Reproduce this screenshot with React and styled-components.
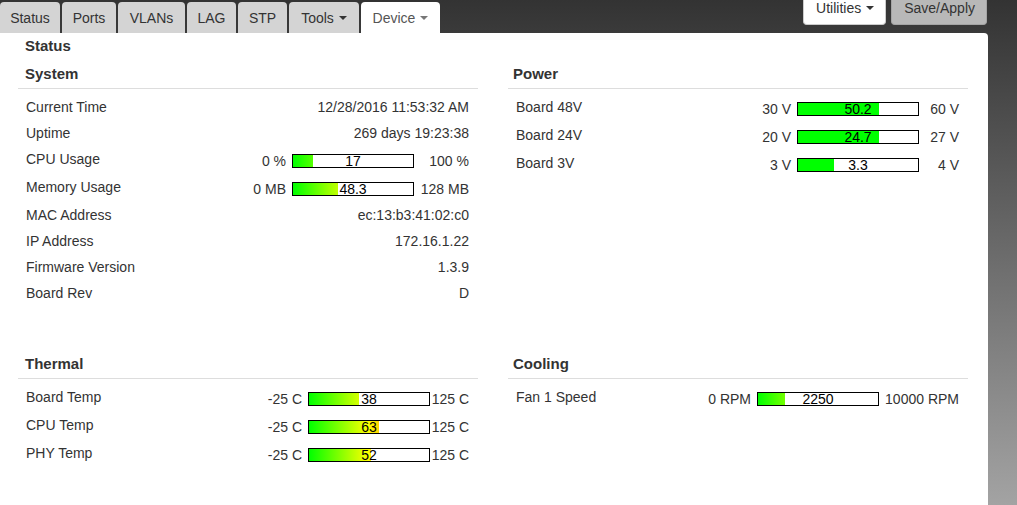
import React from 'react';
import styled, { createGlobalStyle } from 'styled-components';

const Global = createGlobalStyle`
  html, body { margin: 0; padding: 0; }
  body {
    font-family: "Liberation Sans", Arial, sans-serif;
    font-size: 14px;
    color: #333;
    background-color: #a3a3a3;
    background-image: linear-gradient(to bottom, #333333 0, #a3a3a3 505px);
    background-repeat: no-repeat;
    min-height: 100vh;
  }
  * { box-sizing: content-box; }
`;

const Page = styled.div`
  width: 988px;
  min-height: 100vh;
  display: flex;
  flex-direction: column;
`;

const TopBar = styled.header`
  display: flex;
  height: 33px;
  flex-shrink: 0;
`;

const Tabs = styled.ul`
  list-style: none;
  margin: 0;
  padding: 0;
  display: flex;
  gap: 2px;
  align-self: flex-end;
  height: 31px;
`;

const Tab = styled.li`
  display: flex;
  align-items: center;
  justify-content: center;
  width: ${(p) => p.$w}px;
  border-radius: 4px 4px 0 0;
  background: ${(p) => (p.$active ? '#fff' : '#d4d4d4')};
  color: ${(p) => (p.$active ? '#555' : '#333')};
  white-space: nowrap;
`;

const Caret = styled.span`
  display: inline-block;
  margin-left: 5px;
  width: 0;
  height: 0;
  border-left: 4px solid transparent;
  border-right: 4px solid transparent;
  border-top: 4px solid ${(p) => p.$color || 'currentColor'};
`;

const Actions = styled.div`
  margin-left: auto;
  margin-right: 1px;
  display: flex;
  gap: 5px;
  align-self: flex-start;
`;

const ActionButton = styled.button`
  font: inherit;
  font-size: 14px;
  line-height: 16px;
  padding: 0 11px 8px 12px;
  border: 1px solid ${(p) => (p.$primary ? '#a4a4a4' : '#ccc')};
  border-top: none;
  border-radius: 0 0 4px 4px;
  background: ${(p) => (p.$primary ? '#b8b8b8' : '#fff')};
  color: #333;
  display: flex;
  align-items: center;
  white-space: nowrap;
`;

const Panel = styled.main`
  flex: 1;
  background: #fff;
  border-radius: 0 4px 0 0;
  padding: 3px 20px 20px 18px;
`;

const PanelTitle = styled.h3`
  margin: 0;
  font-size: 15px;
  font-weight: bold;
  line-height: 20px;
  padding-left: 7px;
`;

const Grid = styled.div`
  display: grid;
  grid-template-columns: 460px 460px;
  column-gap: 30px;
  row-gap: 48px;
  margin-top: 8px;
  align-items: start;
`;

const Section = styled.section``;

const SectionTitle = styled.h4`
  margin: 0;
  font-size: 15px;
  font-weight: bold;
  line-height: 20px;
  padding: 0 7px 4px ${(p) => p.$pl}px;
  border-bottom: 1px solid #ddd;
`;

const Rows = styled.div`
  padding-top: 5px;
`;

const Row = styled.div`
  display: flex;
  justify-content: space-between;
  align-items: flex-start;
  padding: 3px 9px 3px 8px;
  height: ${(p) => (p.$bar ? 22 : 20)}px;
  line-height: 20px;
`;

const Label = styled.span``;

const Value = styled.span`
  text-align: right;
`;

const BarValue = styled.div`
  display: flex;
  align-items: center;
  height: 20px;
  padding-top: 2px;
`;

const MinText = styled.span`
  margin-right: 6px;
`;

const MaxText = styled.span`
  width: ${(p) => p.$w}px;
  text-align: right;
  white-space: nowrap;
`;

const Meter = styled.div`
  display: grid;
  width: 120px;
  height: 12px;
  border: 1px solid #000;
  background: #fff;
`;

const MeterFill = styled.div`
  grid-area: 1 / 1;
  height: 100%;
  background: ${(p) =>
    p.$solid
      ? '#00ff00'
      : 'linear-gradient(to right, #00ff00 0px, #ffff00 60px, #ff0000 120px)'};
`;

const MeterText = styled.span`
  grid-area: 1 / 1;
  text-align: center;
  line-height: 12px;
  color: #000;
  font-size: 14px;
`;

const Bar = ({ min, max, value, lo, hi, solid, maxW }) => {
  const pct = Math.max(0, Math.min(1, (value - lo) / (hi - lo)));
  return (
    <BarValue>
      <MinText>{min}</MinText>
      <Meter>
        <MeterFill $solid={solid} style={{ width: `${pct * 120}px` }} />
        <MeterText>{value}</MeterText>
      </Meter>
      <MaxText $w={maxW}>{max}</MaxText>
    </BarValue>
  );
};

const sections = [
  {
    title: 'System',
    maxW: 55,
    pl: 7,
    rows: [
      { label: 'Current Time', value: '12/28/2016 11:53:32 AM' },
      { label: 'Uptime', value: '269 days 19:23:38' },
      { label: 'CPU Usage', bar: { min: '0 %', max: '100 %', value: '17', lo: 0, hi: 100 } },
      { label: 'Memory Usage', bar: { min: '0 MB', max: '128 MB', value: '48.3', lo: 0, hi: 128 } },
      { label: 'MAC Address', value: 'ec:13:b3:41:02:c0' },
      { label: 'IP Address', value: '172.16.1.22' },
      { label: 'Firmware Version', value: '1.3.9' },
      { label: 'Board Rev', value: 'D' },
    ],
  },
  {
    title: 'Power',
    maxW: 40,
    pl: 5,
    solid: true,
    rows: [
      { label: 'Board 48V', bar: { min: '30 V', max: '60 V', value: '50.2', lo: 30, hi: 60 } },
      { label: 'Board 24V', bar: { min: '20 V', max: '27 V', value: '24.7', lo: 20, hi: 27 } },
      { label: 'Board 3V', bar: { min: '3 V', max: '4 V', value: '3.3', lo: 3, hi: 4 } },
    ],
  },
  {
    title: 'Thermal',
    maxW: 39,
    pl: 7,
    rows: [
      { label: 'Board Temp', bar: { min: '-25 C', max: '125 C', value: '38', lo: -25, hi: 125 } },
      { label: 'CPU Temp', bar: { min: '-25 C', max: '125 C', value: '63', lo: -25, hi: 125 } },
      { label: 'PHY Temp', bar: { min: '-25 C', max: '125 C', value: '52', lo: -25, hi: 125 } },
    ],
  },
  {
    title: 'Cooling',
    maxW: 80,
    pl: 5,
    rows: [
      { label: 'Fan 1 Speed', bar: { min: '0 RPM', max: '10000 RPM', value: '2250', lo: 0, hi: 10000 } },
    ],
  },
];

const tabs = [
  { name: 'Status', w: 60 },
  { name: 'Ports', w: 54 },
  { name: 'VLANs', w: 67 },
  { name: 'LAG', w: 49 },
  { name: 'STP', w: 49 },
  { name: 'Tools', w: 70, caret: true },
  { name: 'Device', w: 79, caret: true, active: true },
];

export default function App() {
  return (
    <>
      <Global />
      <Page>
        <TopBar>
          <Tabs>
            {tabs.map((t) => (
              <Tab key={t.name} $w={t.w} $active={t.active}>
                {t.name}
                {t.caret && <Caret $color={t.active ? '#777' : '#333'} />}
              </Tab>
            ))}
          </Tabs>
          <Actions>
            <ActionButton>
              Utilities
              <Caret $color="#333" />
            </ActionButton>
            <ActionButton $primary>Save/Apply</ActionButton>
          </Actions>
        </TopBar>
        <Panel>
          <PanelTitle>Status</PanelTitle>
          <Grid>
            {sections.map((s) => (
              <Section key={s.title}>
                <SectionTitle $pl={s.pl}>{s.title}</SectionTitle>
                <Rows>
                  {s.rows.map((r) => (
                    <Row key={r.label} $bar={!!r.bar}>
                      <Label>{r.label}</Label>
                      {r.bar ? (
                        <Bar {...r.bar} solid={s.solid} maxW={s.maxW} />
                      ) : (
                        <Value>{r.value}</Value>
                      )}
                    </Row>
                  ))}
                </Rows>
              </Section>
            ))}
          </Grid>
        </Panel>
      </Page>
    </>
  );
}
